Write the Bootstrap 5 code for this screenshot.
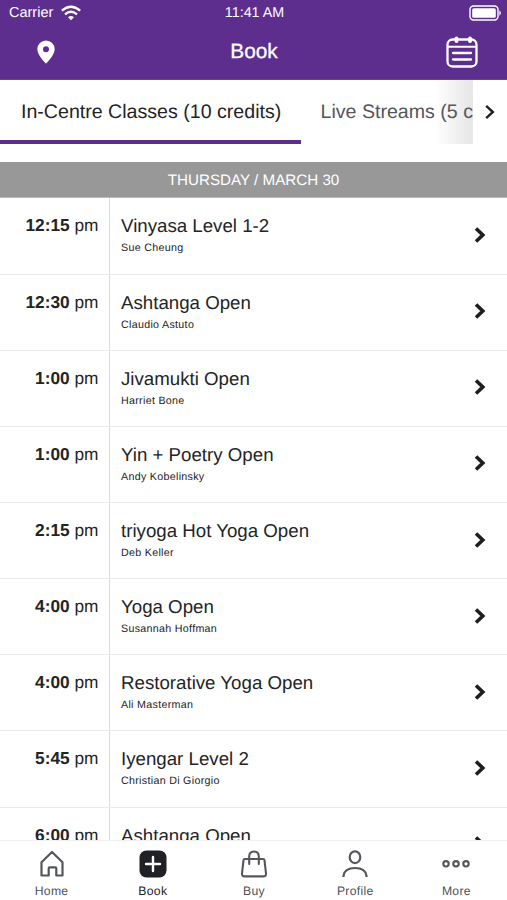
<!DOCTYPE html>
<html lang="en">
<head>
<meta charset="utf-8">
<meta name="viewport" content="width=device-width, initial-scale=1">
<title>Book</title>
<link href="https://cdn.jsdelivr.net/npm/bootstrap@5.3.0/dist/css/bootstrap.min.css" rel="stylesheet">
<style>
  body { font-family: "Liberation Sans", Arial, sans-serif; color: #232426; background: #fff; height: 900px; text-rendering: geometricPrecision; }
  svg { display: block; flex: none; fill: none; }
  .app-head { background: #5e2e8f; height: 80px; border-bottom: 1px solid #6a3d99; }
  .status-row { height: 25px; font-size: 14.5px; line-height: 26px; padding: 0 5px 0 9px; }
  .status-row .clock { font-size: 14.3px; line-height: 24px; margin-right: 2px; }
  .title-row { height: 54px; padding: 0 29px 0 29px; }
  .title-row h1 { font-size: 20.8px; line-height: 54px; margin: 0 6px 0 0; -webkit-text-stroke: .3px #fff; }
  .pin { padding-left: 7px; }
  .side { flex: 1 1 0; }
  .tab-strip { height: 64px; font-size: 19.6px; line-height: 65px; }
  .tab-on { width: 301px; padding-left: 21px; border-bottom: 4px solid #5e2e8f; }
  .tab-off { width: 172px; padding-left: 19.5px; color: #55565b; background: linear-gradient(90deg, #fff 78%, #e6e6e6); }
  .day-bar { height: 36px; margin-top: 18px; background: #989898; font-size: 15.2px; line-height: 37px; border-bottom: 1px solid #b9b9b9; }
  .slot { height: 76.17px; border-bottom: 1px solid #ebebed; flex: none; }
  .slot:first-child { height: 76.5px; }
  .slot-time { width: 110px; padding: 17px 10.5px 0 0; border-right: 1px solid #dddde1; font-size: 17.3px; line-height: 20px; }
  .slot-info { padding: 17px 0 0 11px; }
  .slot-name { font-size: 18.7px; line-height: 22px; }
  .slot-host { font-size: 10.7px; letter-spacing: .3px; line-height: 14px; margin-top: 4px; }
  .slot svg { margin: 0 20px 2px 0; }
  .bottom-nav { height: 60px; padding: 0 0 0 1px; border-top: 1px solid #f2f2f4; font-size: 12.2px; letter-spacing: .3px; color: #505257; }
  .bottom-nav a { color: inherit; padding-top: 9px; line-height: 14px; }
  .bottom-nav a.now { color: #202124; }
  .bottom-nav svg { margin-bottom: 6px; }
</style>
</head>
<body class="d-flex flex-column overflow-hidden">
<header class="app-head text-white flex-shrink-0">
  <div class="status-row d-flex align-items-center">
    <div class="side d-flex align-items-center">Carrier
      <svg class="ms-2" width="20" height="16" viewBox="0 0 20 16" stroke="#fff" stroke-width="2.2"><path d="M.8 5.7Q10-2.2 19.2 5.7M4 9.3Q10 4.2 16 9.3"/><path d="M7 12.2Q10 9.8 13 12.2L10 15.2z" fill="#fff" stroke="none"/></svg>
    </div>
    <div class="clock">11:41 AM</div>
    <div class="side d-flex justify-content-end">
      <svg width="33" height="16" viewBox="0 0 33 16"><rect x="1" y="1" width="28" height="14" rx="3.5" stroke="#fff" stroke-width="1.4"/><rect x="3.2" y="3.2" width="23.6" height="9.6" rx="1.6" fill="#fff"/><path d="M30.4 5.2q3 2.800 0 5.600z" fill="#fff"/></svg>
    </div>
  </div>
  <div class="title-row d-flex align-items-center">
    <div class="side pin"><svg width="20" height="24" viewBox="0 0 20 24"><path fill="#fff" fill-rule="evenodd" d="M10 .5a8.700 8.700 0 0 0-8.700 8.700C1.300 15.300 10 23.500 10 23.500S18.700 15.300 18.700 9.200A8.700 8.700 0 0 0 10 .5zM10 6.200a3 3 0 1 1 0 6 3 3 0 0 1 0-6z"/></svg></div>
    <h1 class="fw-normal">Book</h1>
    <div class="side d-flex justify-content-end"><svg width="32" height="32" viewBox="0 0 32 32" stroke="#fff" stroke-width="2.3" stroke-linecap="round"><rect x="1.500" y="3.500" width="29" height="27" rx="5"/><path d="M2 10.800H30" stroke-width="2"/><path d="M7 17H25M7 23.500H25"/><path d="M10.500 2.500V5M24 2.500V5" stroke-width="4"/></svg></div>
  </div>
</header>

<nav class="tab-strip d-flex flex-shrink-0 text-nowrap">
  <div class="tab-on flex-shrink-0">In-Centre Classes (10 credits)</div>
  <div class="tab-off overflow-hidden flex-shrink-0">Live Streams (5 credits)</div>
  <div class="d-flex align-items-center ps-2 ms-1"><svg width="10" height="16" viewBox="0 0 10 16" stroke="#202124" stroke-width="2.400"><path d="M1.200 1.800L7.900 8L1.200 14.200"/></svg></div>
</nav>
<div class="day-bar text-white text-center flex-shrink-0">THURSDAY / MARCH 30</div>

<main id="slots" class="flex-grow-1 overflow-hidden d-flex flex-column"></main>

<footer class="bottom-nav d-flex flex-shrink-0 bg-white">
  <a class="side d-flex flex-column align-items-center text-decoration-none"><svg width="28" height="28" viewBox="0 0 28 28" stroke="#54565b" stroke-width="2.200" stroke-linejoin="round"><path d="M3.500 12.200L14 2L24.500 12.200V25.500H18.300V18.300Q18.300 17.300 17.300 17.300H11.700Q10.700 17.300 10.700 18.300V25.500H3.500z"/></svg>Home</a>
  <a class="now side d-flex flex-column align-items-center text-decoration-none"><svg width="28" height="28" viewBox="0 0 28 28"><rect x=".5" y=".5" width="27" height="27" rx="7" fill="#202124"/><path d="M14 7V21M7 14H21" stroke="#fff" stroke-width="2.400" stroke-linecap="round"/></svg>Book</a>
  <a class="side d-flex flex-column align-items-center text-decoration-none"><svg width="28" height="28" viewBox="0 0 28 28" stroke="#54565b" stroke-width="2.100" stroke-linejoin="round" stroke-linecap="round"><path d="M5 9H23Q24.300 9 24.500 10.200L26 23.500Q26.200 26.400 23.300 26.400H4.700Q1.800 26.400 2 23.500L3.500 10.200Q3.700 9 5 9z"/><path d="M9.200 14V6.500Q9.200 1.500 14 1.500Q18.800 1.500 18.800 6.500V14"/></svg>Buy</a>
  <a class="side d-flex flex-column align-items-center text-decoration-none"><svg width="28" height="28" viewBox="0 0 28 28" stroke="#54565b" stroke-width="2.200"><ellipse cx="14" cy="7.200" rx="5.300" ry="5.900"/><path d="M2.500 27V25.800Q3.500 18 14 18Q24.500 18 25.500 25.800V27"/></svg>Profile</a>
  <a class="side d-flex flex-column align-items-center text-decoration-none"><svg width="28" height="28" viewBox="0 0 28 28" stroke="#54565b" stroke-width="2.100"><circle cx="4" cy="13.800" r="2.700"/><circle cx="14" cy="13.800" r="2.700"/><circle cx="24" cy="13.800" r="2.700"/></svg>More</a>
</footer>

<script src="https://cdn.jsdelivr.net/npm/bootstrap@5.3.0/dist/js/bootstrap.bundle.min.js"></script>
<script>
  const slots = [
    ["12:15", "Vinyasa Level 1-2", "Sue Cheung"],
    ["12:30", "Ashtanga Open", "Claudio Astuto"],
    ["1:00", "Jivamukti Open", "Harriet Bone"],
    ["1:00", "Yin + Poetry Open", "Andy Kobelinsky"],
    ["2:15", "triyoga Hot Yoga Open", "Deb Keller"],
    ["4:00", "Yoga Open", "Susannah Hoffman"],
    ["4:00", "Restorative Yoga Open", "Ali Masterman"],
    ["5:45", "Iyengar Level 2", "Christian Di Giorgio"],
    ["6:00", "Ashtanga Open", ""]
  ];
  document.getElementById("slots").innerHTML = slots.map(([t, n, h]) => `
    <div class="slot d-flex">
      <div class="slot-time text-end flex-shrink-0"><b>${t}</b> pm</div>
      <div class="slot-info flex-grow-1"><div class="slot-name">${n}</div><div class="slot-host">${h}</div></div>
      <svg class="align-self-center" width="14" height="18" viewBox="0 0 14 18" stroke="#1d1e20" stroke-width="3.600"><path d="M3 2.500L9.800 9L3 15.500"/></svg>
    </div>`).join("");
</script>
</body>
</html>
